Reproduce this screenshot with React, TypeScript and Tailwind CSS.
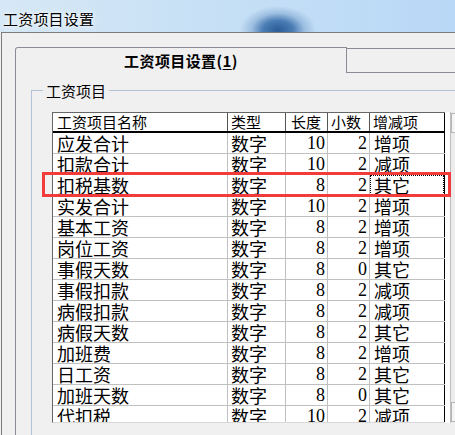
import React from "react";

type Row = { name: string; type: string; len: number; dec: number; kind: string };

const rows: Row[] = [
  { name: "应发合计", type: "数字", len: 10, dec: 2, kind: "增项" },
  { name: "扣款合计", type: "数字", len: 10, dec: 2, kind: "减项" },
  { name: "扣税基数", type: "数字", len: 8, dec: 2, kind: "其它" },
  { name: "实发合计", type: "数字", len: 10, dec: 2, kind: "增项" },
  { name: "基本工资", type: "数字", len: 8, dec: 2, kind: "增项" },
  { name: "岗位工资", type: "数字", len: 8, dec: 2, kind: "增项" },
  { name: "事假天数", type: "数字", len: 8, dec: 0, kind: "其它" },
  { name: "事假扣款", type: "数字", len: 8, dec: 2, kind: "减项" },
  { name: "病假扣款", type: "数字", len: 8, dec: 2, kind: "减项" },
  { name: "病假天数", type: "数字", len: 8, dec: 2, kind: "其它" },
  { name: "加班费", type: "数字", len: 8, dec: 2, kind: "增项" },
  { name: "日工资", type: "数字", len: 8, dec: 2, kind: "其它" },
  { name: "加班天数", type: "数字", len: 8, dec: 0, kind: "其它" },
  { name: "代扣税", type: "数字", len: 10, dec: 2, kind: "减项" },
];

const cols = "grid grid-cols-[175px_58px_42px_42px_75px]";

export default function App() {
  return (
    <div className="relative w-[455px] h-[435px] overflow-hidden bg-[#f0f0f0] font-['Noto_Sans_CJK_SC',sans-serif] text-black">
      {/* Title bar */}
      <div className="h-[32px] bg-[radial-gradient(ellipse_38px_24px_at_278px_30px,#2c5c95_0%,#4b7db5_40%,rgba(120,160,205,0.5)_70%,transparent_100%),linear-gradient(90deg,#d6e8f6_0%,#c7e0f5_45%,#b9d8f7_100%)] pl-[3px] pt-[6px]">
        <span className="text-[15px] leading-[20px] tracking-[0.2px] [text-shadow:0_0_6px_#fff,0_0_3px_#fff]">工资项目设置</span>
      </div>

      {/* Client area */}
      <div className="h-[403px] ml-[1px] border-t border-l border-[#7c7c7c] pl-[13px] pt-[14px]">
        {/* Tabs */}
        <div className="flex h-[26px]">
          <div className="w-[332px] h-[26px] border-l border-t border-r border-[#898c95] rounded-tl-[3px] flex items-center justify-center bg-[#f0f0f0]">
            <span className="text-[15px] font-bold leading-[20px] pt-[1px] tracking-[0.4px]">
              工资项目设置(<span className="underline underline-offset-2">1</span>)
            </span>
          </div>
          <div className="flex-1 mt-[1px] h-[25px] border-t border-b border-[#898c95] bg-[#f0f0f0]" />
        </div>

        {/* Tab panel */}
        <div className="h-[400px] border-l border-[#898c95] pl-[15px] pt-[9px]">
          <fieldset className="border-l border-t border-[#b3c3d7] h-[400px]">
            <legend className="ml-[11px] px-[3px] text-[15px] leading-[17px]">工资项目</legend>

            <div className="ml-[20px] mt-[13px] flex h-[311px]">
              {/* Grid */}
              <div className="w-[393px] h-[311px] overflow-hidden border-l border-t border-b border-l-[#666] border-t-[#666] border-b-[#d8d8d8] bg-white">
                <div className={`${cols} h-[20px] border-b-2 border-black text-[15px] leading-[18px]`}>
                  <div className="border-r border-[#555] pl-[4px]">工资项目名称</div>
                  <div className="border-r border-[#555] pl-[3px]">类型</div>
                  <div className="border-r border-[#555] pl-[5px]">长度</div>
                  <div className="border-r border-[#555] pl-[3px]">小数</div>
                  <div className="border-r border-black pl-[3px]">增减项</div>
                </div>
                {rows.map((r, i) => (
                  <div
                    key={r.name}
                    className={`${cols} h-[21px] border-b border-[#c0c0c0] text-[18px] leading-[20px] font-['Liberation_Serif','Noto_Sans_CJK_SC',serif]`}
                  >
                    <div className="border-r border-[#c0c0c0] pl-[4px] font-['Noto_Sans_CJK_SC',sans-serif]">{r.name}</div>
                    <div className="border-r border-[#c0c0c0] pl-[3px] font-['Noto_Sans_CJK_SC',sans-serif]">{r.type}</div>
                    <div className="border-r border-[#c0c0c0] pr-[2px] text-right">{r.len}</div>
                    <div className="border-r border-[#c0c0c0] pr-[2px] text-right">{r.dec}</div>
                    <div className="border-r border-black font-['Noto_Sans_CJK_SC',sans-serif]">
                      <div
                        className={
                          i === 2
                            ? "h-[20px] border border-dotted border-black pl-[3px] leading-[18px]"
                            : "pl-[4px]"
                        }
                      >
                        {r.kind}
                      </div>
                    </div>
                  </div>
                ))}
              </div>
              {/* Scrollbar */}
              <div className="w-[5px] h-[311px] bg-white" />
              <div className="flex-1 h-[311px] border-l border-[#bdbdbd] bg-[#ececec] flex flex-col justify-between py-[1px]">
                <div className="h-[20px] border-t border-b border-l border-[#b5b5b5] bg-[#f4f4f4]" />
                <div className="h-[20px] border-t border-b border-l border-[#b5b5b5] bg-[#f4f4f4]" />
              </div>
            </div>
          </fieldset>
        </div>
      </div>

      {/* Red highlight over the selected row */}
      <div className="absolute left-[42px] top-[172px] w-[409px] h-[25px] border-[3px] border-[#f23b3b] pointer-events-none" />
    </div>
  );
}
